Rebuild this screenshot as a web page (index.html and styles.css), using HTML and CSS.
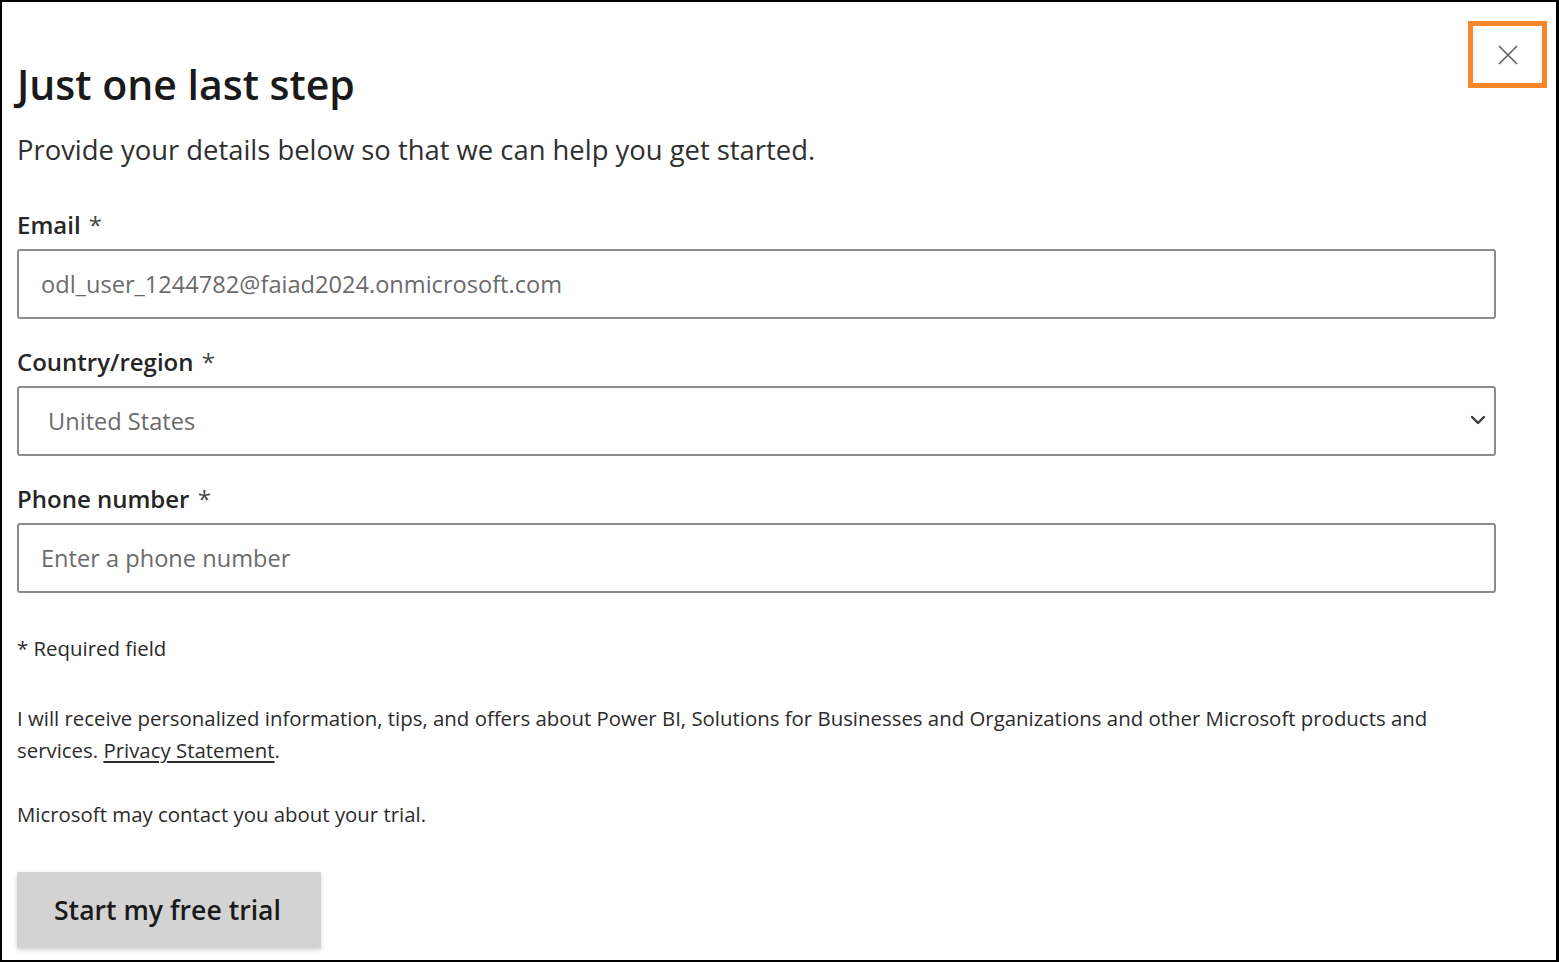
FILE: index.html
```html
<!DOCTYPE html>
<html lang="en">
<head>
<meta charset="utf-8">
<title>Just one last step</title>
<link rel="stylesheet" href="styles.css">
</head>
<body>
<div class="frame">
  <button class="close" aria-label="Close">
    <svg width="22" height="22" viewBox="0 0 22 22"><path d="M2 2 L20 20 M20 2 L2 20" stroke="#5f5f5f" stroke-width="1.6" fill="none"/></svg>
  </button>
  <main class="content">
    <h1 class="title">Just one last step</h1>
    <p class="subtitle">Provide your details below so that we can help you get started.</p>

    <label class="label first">Email <span class="req">*</span></label>
    <div class="field"><span class="value">odl_user_1244782@faiad2024.onmicrosoft.com</span></div>

    <label class="label">Country/region <span class="req">*</span></label>
    <div class="field select"><span class="value country">United States</span>
      <svg class="chev" width="16" height="10" viewBox="0 0 16 10"><path d="M2 2 L8 8 L14 2" stroke="#3a3a3a" stroke-width="2.4" fill="none" stroke-linecap="round" stroke-linejoin="round"/></svg>
    </div>

    <label class="label">Phone number <span class="req">*</span></label>
    <div class="field"><span class="value">Enter a phone number</span></div>

    <p class="small required">* Required field</p>
    <p class="small para">I will receive personalized information, tips, and offers about Power BI, Solutions for Businesses and Organizations and other Microsoft products and services. <a href="#" class="link">Privacy Statement</a>.</p>
    <p class="small contact">Microsoft may contact you about your trial.</p>

    <button class="cta">Start my free trial</button>
  </main>
</div>
</body>
</html>
```

FILE: styles.css
```css
* { box-sizing: border-box; }
html, body { margin: 0; padding: 0; background: #000; }
body { font-family: "Open Sans", "Noto Sans", sans-serif; color: #262626; }

.frame {
  position: relative;
  width: 1559px;
  height: 962px;
  background: #fff;
  border-left: 2px solid #000;
  border-top: 2px solid #000;
  border-right: 3px solid #000;
  border-bottom: 2px solid #000;
  overflow: hidden;
}

.close {
  position: absolute;
  top: 19px;
  right: 9px;
  width: 79px;
  height: 67px;
  border: 5px solid #f7862b;
  background: #fff;
  padding: 0;
  display: flex;
  align-items: center;
  justify-content: center;
}
.close svg { display: block; }

.content {
  padding: 57px 0 0 15px;
  width: 1494px;
  display: flex;
  flex-direction: column;
  align-items: flex-start;
}

.title {
  margin: 0;
  font-size: 41px;
  line-height: 50px;
  font-weight: 600;
  color: #1a1a1a;
}

.subtitle {
  margin: 23px 0 0;
  font-size: 27.4px;
  line-height: 36px;
  color: #2f2f2f;
}

.label {
  display: block;
  font-size: 24px;
  line-height: 30px;
  font-weight: 600;
  color: #262626;
  margin-top: 28px;
  margin-bottom: 9px;
}
.label.first { margin-top: 42px; }
.req { font-weight: 400; color: #444; margin-left: 2px; }

.field {
  width: 100%;
  height: 70px;
  border: 2px solid #8c8c8c;
  border-radius: 3px;
  display: flex;
  align-items: center;
  padding-left: 22px;
  padding-right: 8px;
}
.field .value {
  font-size: 23.6px;
  color: #6b6b6b;
}
.field .country { margin-left: 7px; }
.select { justify-content: space-between; }
.chev { margin-top: -2px; }

.small {
  margin: 0;
  font-size: 20.4px;
  line-height: 32px;
  color: #2b2b2b;
}
.required { margin-top: 39px; }
.para { margin-top: 38px; max-width: 1440px; }
.contact { margin-top: 32px; }
.link {
  display: inline-block;
  color: #2b2b2b;
  text-decoration: underline;
  text-underline-offset: 3px;
}

.cta {
  margin-top: 42px;
  width: 304px;
  height: 76px;
  border: none;
  background: #d3d3d3;
  box-shadow: 0 2px 4px rgba(0,0,0,0.18);
  font-family: inherit;
  font-size: 26.6px;
  font-weight: 600;
  color: #1a1a1a;
  text-align: left;
  padding: 0 0 0 37px;
}
```
